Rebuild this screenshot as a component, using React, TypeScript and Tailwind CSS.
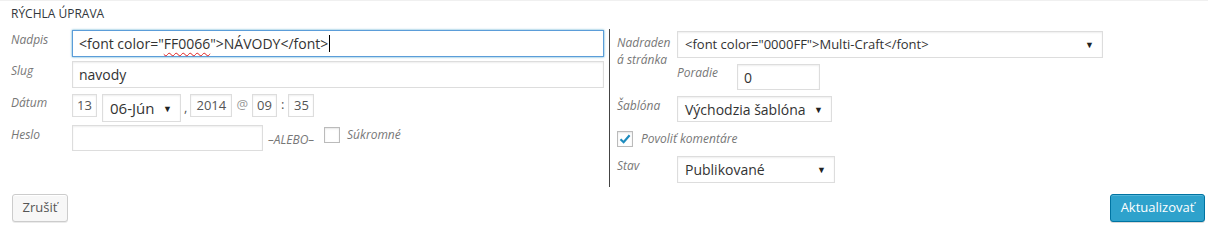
import React from "react";

const box =
  "border border-[#ddd] bg-white shadow-[inset_0_1px_2px_rgba(0,0,0,0.07)] text-[#333]";

function Label({ children, className = "" }: { children: React.ReactNode; className?: string }) {
  return (
    <span className={`block shrink-0 text-[12px] italic leading-4 text-[#777] ${className}`}>
      {children}
    </span>
  );
}

function Select({ value, className = "", textSize = "text-[14px]" }: { value: string; className?: string; textSize?: string }) {
  return (
    <div className={`${box} flex items-center justify-between pl-[7px] pr-[8px] ${className}`}>
      <span className={`${textSize} whitespace-nowrap`}>{value}</span>
      <span className="text-[9px] leading-none text-[#222]">▼</span>
    </div>
  );
}

function Small({ value, className = "" }: { value: string; className?: string }) {
  return (
    <div className={`${box} flex h-[23px] items-center justify-center text-[13px] text-[#555] ${className}`}>
      {value}
    </div>
  );
}

export default function App() {
  return (
    <div className="h-[228px] w-[1208px] overflow-hidden border-t border-[#f0f0f0] bg-white font-['Open_Sans',sans-serif]">
      <div className="pl-[11px] pt-[5px] text-[12px] leading-4 text-[#32373c]">RÝCHLA ÚPRAVA</div>

      <div className="mt-[7px] flex">
        {/* left column */}
        <div className="flex w-[604px] flex-col pl-[11px]">
          <div className="mt-px flex">
            <Label className="w-[61px] pt-[2px]">Nadpis</Label>
            <div className="flex h-[27px] w-[532px] items-center border border-[#5b9dd9] pl-[6px] text-[14px] text-[#333] shadow-[0_0_2px_rgba(30,140,190,0.8)]">
              <span className="whitespace-nowrap">
                &lt;font color="
                <span className="underline decoration-[#e02020] decoration-wavy decoration-1 underline-offset-[3px]">FF0066</span>
                "&gt;NÁVODY&lt;/font&gt;
              </span>
              <span className="ml-px inline-block h-[17px] w-px bg-black" />
            </div>
          </div>

          <div className="mt-[4px] flex">
            <Label className="w-[61px] pt-[2px]">Slug</Label>
            <div className={`${box} flex h-[27px] w-[532px] items-center pl-[6px] text-[14px]`}>navody</div>
          </div>

          <div className="mt-[6px] flex items-start">
            <Label className="w-[61px] pt-[1px]">Dátum</Label>
            <Small value="13" className="w-[25px]" />
            <Select value="06-Jún" className="ml-[5px] h-[28px] w-[79px]" textSize="text-[15px]" />
            <span className="ml-[3px] mt-[4px] text-[13px] text-[#555]">,</span>
            <Small value="2014" className="ml-[3px] w-[42px]" />
            <span className="ml-[4px] mt-[1px] text-[13px] text-[#999]">@</span>
            <Small value="09" className="ml-[4px] w-[25px]" />
            <span className="ml-[4px] mt-[1px] text-[13px] text-[#555]">:</span>
            <Small value="35" className="ml-[4px] w-[26px]" />
          </div>

          <div className="mt-[3px] flex items-start">
            <Label className="w-[61px] pt-[2px]">Heslo</Label>
            <div className={`${box} h-[26px] w-[191px]`} />
            <span className="ml-[5px] pt-[7px] text-[12px] italic leading-4 text-[#777]">–ALEBO–</span>
            <div className="ml-[10px] mt-[2px] h-[16px] w-[16px] border border-[#bbb] bg-white shadow-[inset_0_1px_2px_rgba(0,0,0,0.1)]" />
            <span className="ml-[7px] pt-[2px] text-[12px] italic leading-4 text-[#777]">Súkromné</span>
          </div>
        </div>

        {/* divider */}
        <div className="ml-[5px] h-[158px] w-px bg-[#444]" />

        {/* right column */}
        <div className="flex flex-col pl-[7px]">
          <div className="mt-[2px] flex">
            <Label className="w-[60px] pt-[3px] leading-[17px]">
              Nadraden
              <br />á stránka
            </Label>
            <div className="flex flex-col">
              <Select value={'<font color="0000FF">Multi-Craft</font>'} className="h-[27px] w-[426px]" textSize="text-[13px]" />
              <div className="mt-[6px] flex">
                <Label className="w-[60px] pt-[1px]">Poradie</Label>
                <div className={`${box} flex h-[26px] w-[83px] items-center pl-[6px] text-[14px]`}>0</div>
              </div>
            </div>
          </div>

          <div className="mt-[6px] flex">
            <Label className="w-[60px] pt-[2px]">Šablóna</Label>
            <Select value="Východzia šablóna" className="h-[26px] w-[155px]" />
          </div>

          <div className="mt-[9px] flex items-center">
            <div className="flex h-[16px] w-[16px] items-center justify-center border border-[#bbb] bg-white shadow-[inset_0_1px_2px_rgba(0,0,0,0.1)]">
              <svg width="14" height="14" viewBox="0 0 14 14">
                <path d="M2.5 7.2 L5.6 10.2 L11.6 3.2" fill="none" stroke="#1e8cbe" strokeWidth="2.2" />
              </svg>
            </div>
            <span className="ml-[8px] text-[12px] italic leading-4 text-[#777]">Povoliť komentáre</span>
          </div>

          <div className="mt-[9px] flex">
            <Label className="w-[60px] pt-[2px]">Stav</Label>
            <Select value="Publikované" className="h-[27px] w-[158px]" />
          </div>
        </div>
      </div>

      <div className="mt-[7px] flex items-start justify-between pl-[12px] pr-[3px]">
        <button className="h-[28px] w-[56px] rounded-[3px] border border-[#ccc] bg-[#f7f7f7] text-[13px] text-[#555] shadow-[inset_0_1px_0_#fff,0_1px_0_rgba(0,0,0,0.08)]">
          Zrušiť
        </button>
        <button className="h-[28px] w-[95px] rounded-[3px] border border-[#0074a2] bg-[#2ea2cc] text-[13px] text-white shadow-[inset_0_1px_0_rgba(120,200,230,0.5),0_1px_0_rgba(0,0,0,0.15)]">
          Aktualizovať
        </button>
      </div>
    </div>
  );
}
